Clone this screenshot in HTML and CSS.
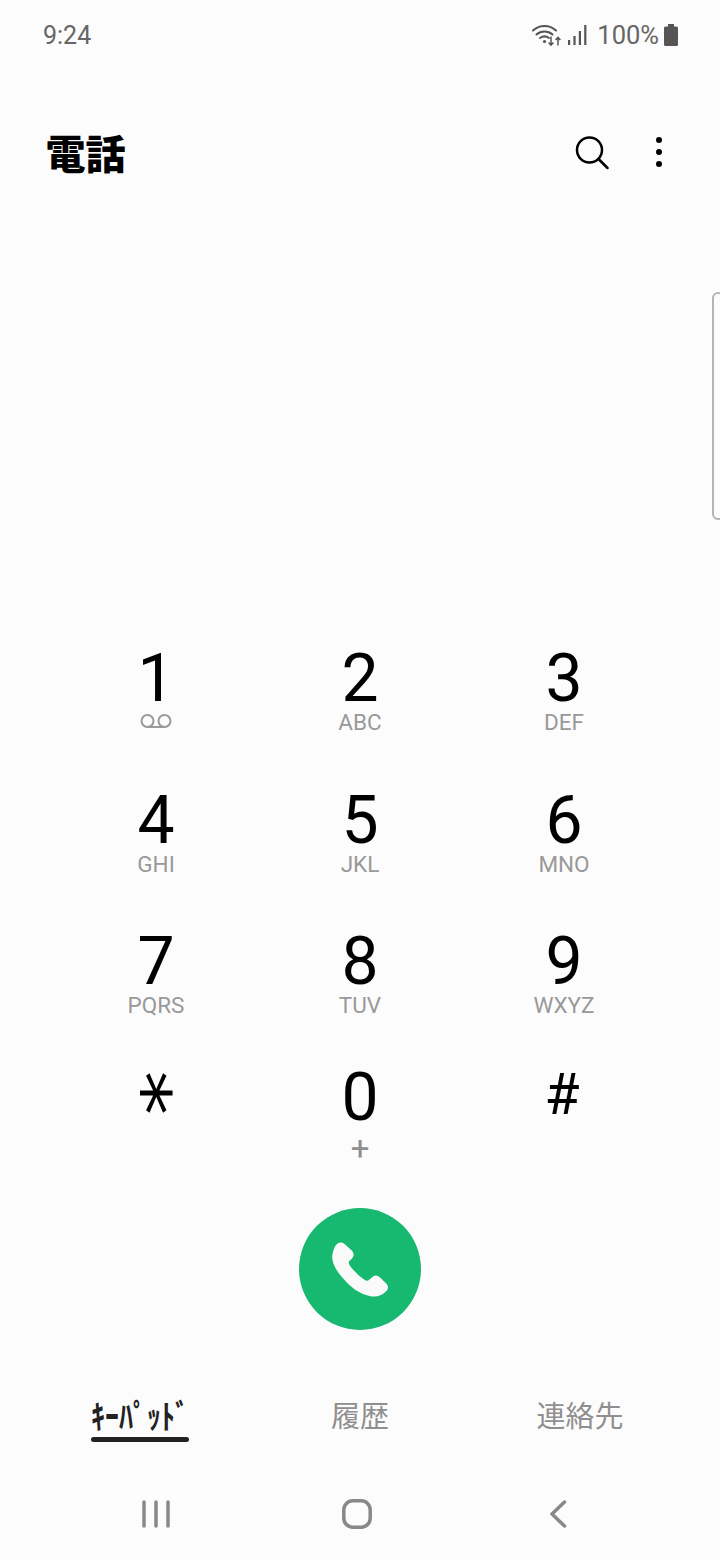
FILE: index.html
```html
<!DOCTYPE html>
<html lang="ja">
<head>
<meta charset="utf-8">
<title>電話</title>
<link rel="stylesheet" href="styles.css">
</head>
<body>
<div class="screen">
  <div class="status">
    <span class="time">9:24</span>
    <div class="status-right">
      <svg class="ic-wifi" viewBox="0 0 30 24" width="30" height="24">
        <g fill="none" stroke="#555" stroke-width="2" stroke-linecap="round">
          <path d="M1 7.500C7.500 1.500 17.500 1.500 24 7.500"/>
          <path d="M4.500 11.500C9 7.500 16 7.500 20.500 11.500"/>
          <path d="M8 15C10.800 13 14.200 13 17 15"/>
        </g>
        <circle cx="12.500" cy="18.500" r="1.600" fill="#555"/>
        <g fill="none" stroke="#555" stroke-width="1.500">
          <path d="M19 13.500V22M16.600 19.600L19 22.200L21.400 19.600"/>
          <path d="M26 22.500V14.500M23.600 17L26 14.400L28.400 17"/>
        </g>
      </svg>
      <svg class="ic-signal" viewBox="0 0 19 20" width="19" height="20">
        <g fill="#555">
          <rect x="0" y="15" width="2.200" height="5"/>
          <rect x="5.400" y="11" width="2.200" height="9"/>
          <rect x="10.800" y="6" width="2.200" height="14"/>
          <rect x="16.200" y="0" width="2.200" height="20"/>
        </g>
      </svg>
      <span class="pct">100%</span>
      <svg class="ic-batt" viewBox="0 0 14 22" width="14" height="22">
        <path fill="#555" d="M4 0H10V2.500H12.500Q14 2.500 14 4V20.500Q14 22 12.500 22H1.500Q0 22 0 20.500V4Q0 2.500 1.500 2.500H4Z"/>
      </svg>
    </div>
  </div>

  <header class="header">
    <h1 class="title">電話</h1>
    <div class="actions">
      <svg class="ic-search" viewBox="0 0 36 36" width="36" height="36">
        <circle cx="15.500" cy="15" r="12.500" fill="none" stroke="#000" stroke-width="2.500"/>
        <path d="M24.500 24L33.500 33" fill="none" stroke="#000" stroke-width="2.500" stroke-linecap="round"/>
      </svg>
      <svg class="ic-more" viewBox="0 0 6 30" width="6" height="30">
        <circle cx="3" cy="3" r="3"/>
        <circle cx="3" cy="15" r="3"/>
        <circle cx="3" cy="27" r="3"/>
      </svg>
    </div>
  </header>

  <div class="handle"></div>

  <main class="keypad">
    <div class="key"><span class="digit">1</span>
      <svg class="ic-vm" viewBox="0 0 32 15" width="32" height="15">
        <g fill="none" stroke="#999" stroke-width="2">
          <circle cx="7.500" cy="7" r="6"/>
          <circle cx="24.500" cy="7" r="6"/>
          <path d="M7.500 13H24.500"/>
        </g>
      </svg>
    </div>
    <div class="key"><span class="digit">2</span><span class="sub">ABC</span></div>
    <div class="key"><span class="digit">3</span><span class="sub">DEF</span></div>
    <div class="key"><span class="digit">4</span><span class="sub">GHI</span></div>
    <div class="key"><span class="digit">5</span><span class="sub">JKL</span></div>
    <div class="key"><span class="digit">6</span><span class="sub">MNO</span></div>
    <div class="key"><span class="digit">7</span><span class="sub">PQRS</span></div>
    <div class="key"><span class="digit">8</span><span class="sub">TUV</span></div>
    <div class="key"><span class="digit">9</span><span class="sub">WXYZ</span></div>
    <div class="key"><span class="digit star">*</span></div>
    <div class="key"><span class="digit">0</span><span class="sub plus">+</span></div>
    <div class="key"><span class="digit hash">#</span></div>
  </main>

  <div class="call-row">
    <div class="call">
      <svg viewBox="690 570 175 172" width="58" height="57">
        <path fill="#fafafa" d="M700 590Q712 568 730 578L752 598Q764 610 754 622L744 632Q742 638 748 646Q770 674 792 688Q800 692 806 686L816 678Q826 670 838 680L858 700Q868 712 854 724Q836 742 806 736Q760 726 722 678Q690 640 694 612Q696 600 700 590Z"/>
      </svg>
    </div>
  </div>

  <nav class="tabs">
    <div class="tab active"><span class="tab-label"><span class="kana">ｷｰﾊﾟｯﾄﾞ</span><span class="bar"></span></span></div>
    <div class="tab"><span class="tab-label">履歴</span></div>
    <div class="tab"><span class="tab-label">連絡先</span></div>
  </nav>

  <div class="navbar">
    <svg viewBox="0 0 28 28" width="28" height="28">
      <g fill="none" stroke="#888" stroke-width="3.500" stroke-linecap="round">
        <path d="M2 2V26M14 2V26M26 2V26"/>
      </g>
    </svg>
    <svg class="ic-home" viewBox="0 0 30 30" width="30" height="30">
      <rect x="1.800" y="1.800" width="26.400" height="26.400" rx="9" fill="none" stroke="#888" stroke-width="3.500"/>
    </svg>
    <svg viewBox="0 0 18 28" width="18" height="28">
      <path d="M14.500 2L2 14L14.500 26" fill="none" stroke="#888" stroke-width="3.500" stroke-linecap="round" stroke-linejoin="round"/>
    </svg>
  </div>
</div>
</body>
</html>
```

FILE: styles.css
```css
* { box-sizing: border-box; }
html, body { margin: 0; padding: 0; }
body {
  background: #fcfcfc;
  font-family: Roboto, "Noto Sans CJK JP", sans-serif;
}
.screen {
  position: relative;
  width: 720px;
  height: 1560px;
  overflow: hidden;
  background: #fcfcfc;
}
.status {
  height: 70px;
  display: flex;
  align-items: center;
  justify-content: space-between;
  padding: 0 42px 0 43px;
  color: #666;
  font-size: 25px;
  font-weight: 400;
}
.status-right { display: flex; align-items: center; }
.ic-wifi { margin-right: 6px; }
.ic-signal { margin-right: 10px; }
.pct { font-size: 25.500px; margin-right: 5px; }
.header {
  height: 168px;
  display: flex;
  align-items: center;
  justify-content: space-between;
  padding: 0 58px 0 45.500px;
}
.title {
  margin: -4px 0 0;
  font-family: "Noto Sans CJK JP", sans-serif;
  font-size: 40px;
  font-weight: 900;
  line-height: 48px;
  color: #000;
}
.actions { display: flex; align-items: center; gap: 46px; }
.ic-search { margin-top: -2px; }
.ic-more { margin-top: -4px; }
.handle {
  position: absolute;
  right: -4px;
  top: 292px;
  width: 12px;
  height: 228px;
  border: 2px solid #b4b4b4;
  border-radius: 8px;
}
.keypad {
  margin-top: 408px;
  padding: 0 54px;
  display: grid;
  grid-template-columns: repeat(3, 204px);
  grid-template-rows: 142px 141px 136px 143px;
}
.key {
  display: flex;
  flex-direction: column;
  align-items: center;
}
.digit {
  font-size: 66px;
  font-weight: 400;
  line-height: 66px;
  color: #000;
}
.sub {
  font-size: 22.500px;
  font-weight: 400;
  line-height: 20px;
  color: #999;
}
.plus { font-size: 33px; line-height: 32px; margin-top: 2px; color: #8f8f8f; }
.ic-vm { margin-top: 2px; }
.star {
  font-family: "DejaVu Sans", sans-serif;
  font-weight: 400;
  font-size: 72px;
  transform: translate(-11px, -5px) scaleY(1.25) rotate(90deg);
}
.hash { font-size: 57px; margin: -3px 0 0 -4px; }
.call-row { display: flex; justify-content: center; }
.call {
  width: 122px;
  height: 122px;
  border-radius: 50%;
  background: #17b86f;
  display: flex;
  align-items: center;
  justify-content: center;
}
.tabs {
  margin-top: 62px;
  padding: 0 30px;
  display: grid;
  grid-template-columns: repeat(3, 220px);
}
.tab { display: flex; justify-content: center; }
.tab-label {
  position: relative;
  font-family: "Noto Sans CJK JP", sans-serif;
  font-size: 29px;
  line-height: 44px;
  color: #8f8f8f;
}
.active .tab-label { color: #222; font-weight: 700; font-size: 28px; }
.kana { display: inline-block; transform: translateY(1px) scaleY(1.2); }
.bar {
  position: absolute;
  left: 0;
  right: 0;
  bottom: -6px;
  height: 5px;
  border-radius: 3px;
  background: #222;
}
.navbar {
  margin-top: 63px;
  padding: 0 152px 0 142px;
  display: flex;
  align-items: center;
  justify-content: space-between;
}
.ic-home { margin-right: 6px; }
```
